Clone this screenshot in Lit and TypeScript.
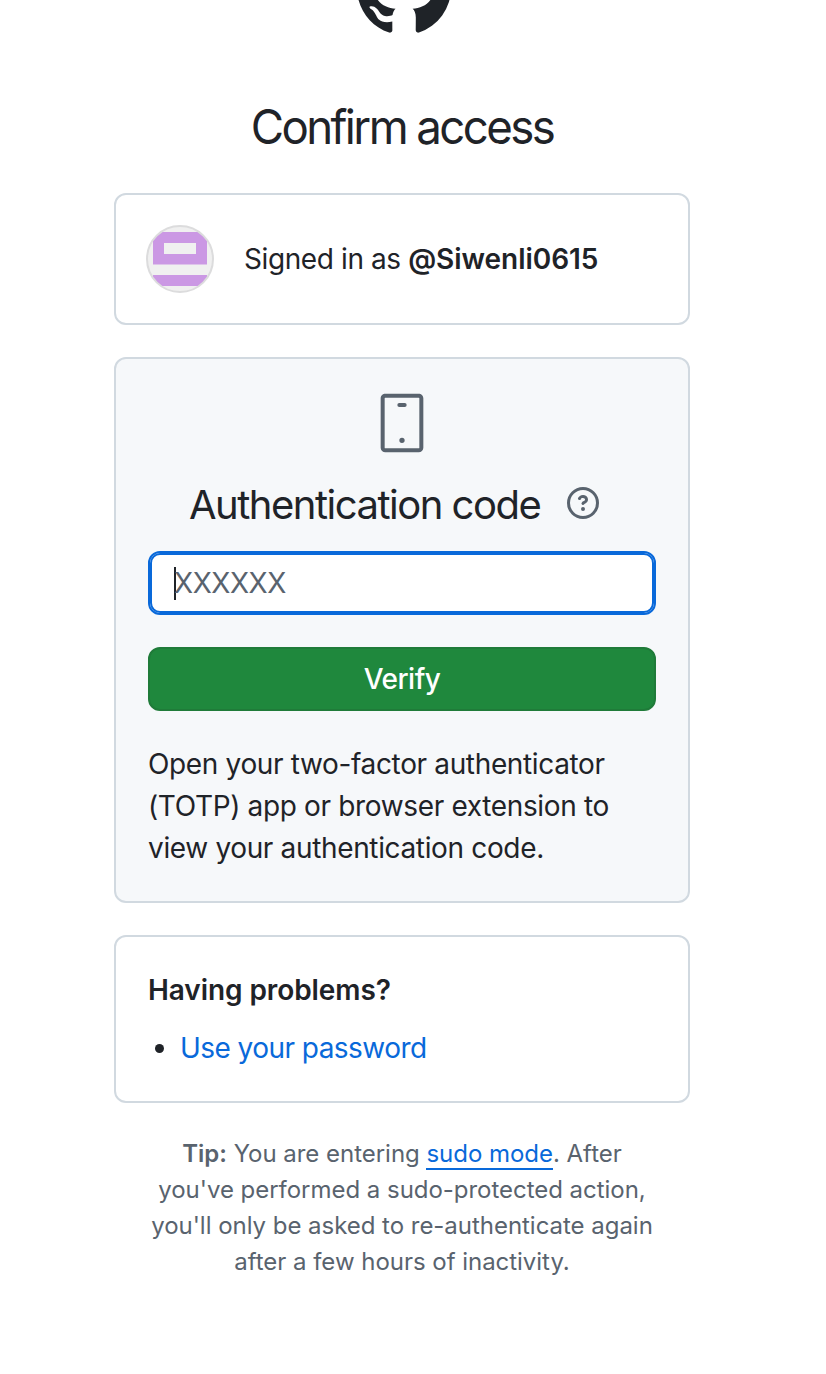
import { LitElement, html, css } from "lit";
import { customElement } from "lit/decorators.js";

@customElement("app-root")
export class AppRoot extends LitElement {
  static styles = css`
    :host {
      display: block;
      box-sizing: border-box;
      height: 1374px;
      overflow: hidden;
      background: #fff;
      color: #1f2328;
      font-family: Inter, "Noto Sans", sans-serif;
      font-size: 28px;
      line-height: 42px;
    }
    * { box-sizing: border-box; }
    svg { display: block; }
    .page { width: 576px; margin-left: 114px; }
    .header {
      height: 35px;
      display: flex;
      justify-content: center;
      align-items: flex-end;
      padding-left: 4px;
      overflow: hidden;
    }
    .mark { flex: none; width: 94px; height: 94px; fill: #1f2328; }
    h1, h2, h3, p, ul { margin: 0; padding: 0; white-space: nowrap; }
    .title {
      margin-top: 56px;
      height: 72px;
      line-height: 72px;
      text-align: center;
      font-size: 48px;
      font-weight: 420;
      letter-spacing: -2.7px;
      transform: scaleX(0.95);
    }
    .card { border: 2px solid #d1d9e0; border-radius: 12px; }
    .account {
      margin-top: 30px;
      height: 132px;
      display: flex;
      align-items: center;
      padding-left: 30px;
      gap: 30px;
    }
    .avatar { width: 68px; height: 68px; }
    .signed { letter-spacing: -0.4px; }
    .signed strong { letter-spacing: -0.05px; }
    .code {
      margin-top: 32px;
      height: 546px;
      background: #f6f8fa;
      padding: 32px 32px 0;
    }
    .device { width: 64px; height: 64px; margin: 0 auto; fill: #59636e; }
    .heading {
      display: flex;
      align-items: center;
      height: 60px;
      margin-top: 20px;
      padding-left: 41px;
    }
    .subtitle { font-size: 40px; font-weight: 420; line-height: 60px; letter-spacing: -1.5px; }
    .help { width: 32px; height: 32px; margin: -5px 0 0 27px; fill: #59636e; }
    .field {
      display: flex;
      align-items: center;
      height: 64px;
      margin-top: 16px;
      padding-left: 24px;
      border: 2px solid #0969da;
      border-radius: 12px;
      box-shadow: inset 0 0 0 2px #0969da;
      background: #fff;
      color: #59636e;
    }
    .ph { letter-spacing: -0.45px; }
    .caret { width: 2px; height: 33px; margin-right: -2px; background: #1f2328; }
    .verify {
      display: block;
      width: 100%;
      height: 64px;
      margin-top: 32px;
      padding: 0;
      border: 2px solid #1f7b39;
      border-radius: 12px;
      background: #1f883d;
      color: #fff;
      font: 550 28px/56px Inter, sans-serif;
      letter-spacing: -0.5px;
    }
    .hint { margin-top: 32px; letter-spacing: -0.35px; }
    .problems { margin-top: 32px; height: 168px; padding: 32px 32px 0; }
    .problems-title { font-size: 28px; font-weight: 600; line-height: 42px; letter-spacing: -0.08px; }
    .list { list-style: none; margin-top: 16px; }
    .item { display: flex; align-items: center; letter-spacing: -0.55px; }
    .bullet { width: 9px; height: 9px; border-radius: 50%; background: #1f2328; margin: 1px 16px 0 7px; }
    .link { color: #0969da; text-decoration: none; }
    .tip {
      margin-top: 33px;
      text-align: center;
      font-size: 24px;
      line-height: 36px;
      letter-spacing: -0.03px;
      color: #59636e;
    }
    .sudo { border-bottom: 2px solid #0969da; }
    strong { font-weight: 600; }
  `;

  render() {
    return html`
      <div class="page">
        <header class="header">
          <svg class="mark" viewBox="0 0 16 16"><path d="M8 0C3.58 0 0 3.58 0 8c0 3.54 2.29 6.53 5.47 7.59.4.07.55-.17.55-.38 0-.19-.01-.82-.01-1.49-2.01.37-2.53-.49-2.69-.94-.09-.23-.48-.94-.82-1.13-.28-.15-.68-.52-.01-.53.63-.01 1.08.58 1.23.82.72 1.21 1.87.87 2.33.66.07-.52.28-.87.51-1.07-1.78-.2-3.64-.89-3.64-3.95 0-.87.31-1.59.82-2.15-.08-.2-.36-1.02.08-2.12 0 0 .67-.21 2.2.82.64-.18 1.32-.27 2-.27s1.36.09 2 .27c1.53-1.04 2.2-.82 2.2-.82.44 1.1.16 1.92.08 2.12.51.56.82 1.27.82 2.15 0 3.07-1.87 3.75-3.65 3.95.29.25.54.73.54 1.48 0 1.07-.01 1.93-.01 2.2 0 .21.15.46.55.38A8.01 8.01 0 0 0 16 8c0-4.42-3.58-8-8-8Z"/></svg>
        </header>
        <h1 class="title">Confirm access</h1>

        <section class="card account">
          <svg class="avatar" viewBox="0 0 68 68">
            <defs><clipPath id="round"><circle cx="34" cy="34" r="33"/></clipPath></defs>
            <g clip-path="url(#round)">
              <rect width="68" height="68" fill="#f0f0f0"/>
              <path fill="#cb98e4" fill-rule="evenodd" d="M7 7h54v32.500H7zM18 18v11h32V18zM7 50h54v11H7z"/>
            </g>
            <circle cx="34" cy="34" r="33" fill="none" stroke="#dcdcdd" stroke-width="2"/>
          </svg>
          <span class="signed">Signed in as <strong>@Siwenli0615</strong></span>
        </section>

        <section class="card code">
          <svg class="device" viewBox="0 0 24 24"><path d="M10.250 5.250A.75.75 0 0 1 11 4.500h2A.75.75 0 0 1 13 6h-2a.75.75 0 0 1-.75-.75ZM12 19.500a1 1 0 1 0 0-2 1 1 0 0 0 0 2Z"/><path d="M4 2.750C4 1.784 4.784 1 5.750 1h12.500c.966 0 1.750.784 1.750 1.750v18.500A1.750 1.750 0 0 1 18.250 23H5.750A1.750 1.750 0 0 1 4 21.250Zm1.750-.25a.25.25 0 0 0-.25.25v18.500c0 .138.112.25.25.25h12.500a.25.25 0 0 0 .25-.25V2.750a.25.25 0 0 0-.25-.25Z"/></svg>
          <div class="heading">
            <h2 class="subtitle">Authentication code</h2>
            <svg class="help" viewBox="0 0 16 16"><path d="M0 8a8 8 0 1 1 16 0A8 8 0 0 1 0 8Zm8-6.500a6.500 6.500 0 1 0 0 13 6.500 6.500 0 0 0 0-13ZM6.920 6.085h.001a.749.749 0 1 1-1.342-.67c.169-.339.436-.701.849-.977C6.845 4.160 7.369 4 8 4a2.756 2.756 0 0 1 1.637.525c.503.377.863.965.863 1.725 0 .448-.115.83-.329 1.150-.205.307-.470.513-.692.662-.109.072-.220.138-.313.195l-.006.004a6.240 6.240 0 0 0-.260.160.952.952 0 0 0-.276.245.750.750 0 0 1-1.248-.832c.184-.264.420-.489.692-.661.103-.067.207-.132.313-.195l.007-.004c.1-.061.182-.110.258-.161a.969.969 0 0 0 .277-.245C8.960 6.514 9 6.427 9 6.250a.612.612 0 0 0-.262-.525A1.270 1.270 0 0 0 8 5.500c-.369 0-.595.090-.740.187a1.010 1.010 0 0 0-.340.398ZM9 11a1 1 0 1 1-2 0 1 1 0 0 1 2 0Z"/></svg>
          </div>
          <div class="field"><span class="caret"></span><span class="ph">XXXXXX</span></div>
          <button class="verify">Verify</button>
          <p class="hint">Open your two-factor authenticator<br />(TOTP) app or browser extension to<br />view your authentication code.</p>
        </section>

        <section class="card problems">
          <h3 class="problems-title">Having problems?</h3>
          <ul class="list">
            <li class="item"><span class="bullet"></span><a class="link">Use your password</a></li>
          </ul>
        </section>

        <p class="tip"><strong>Tip:</strong> You are entering <a class="link sudo">sudo mode</a>. After<br />you've performed a sudo-protected action,<br />you'll only be asked to re-authenticate again<br />after a few hours of inactivity.</p>
      </div>
    `;
  }
}
